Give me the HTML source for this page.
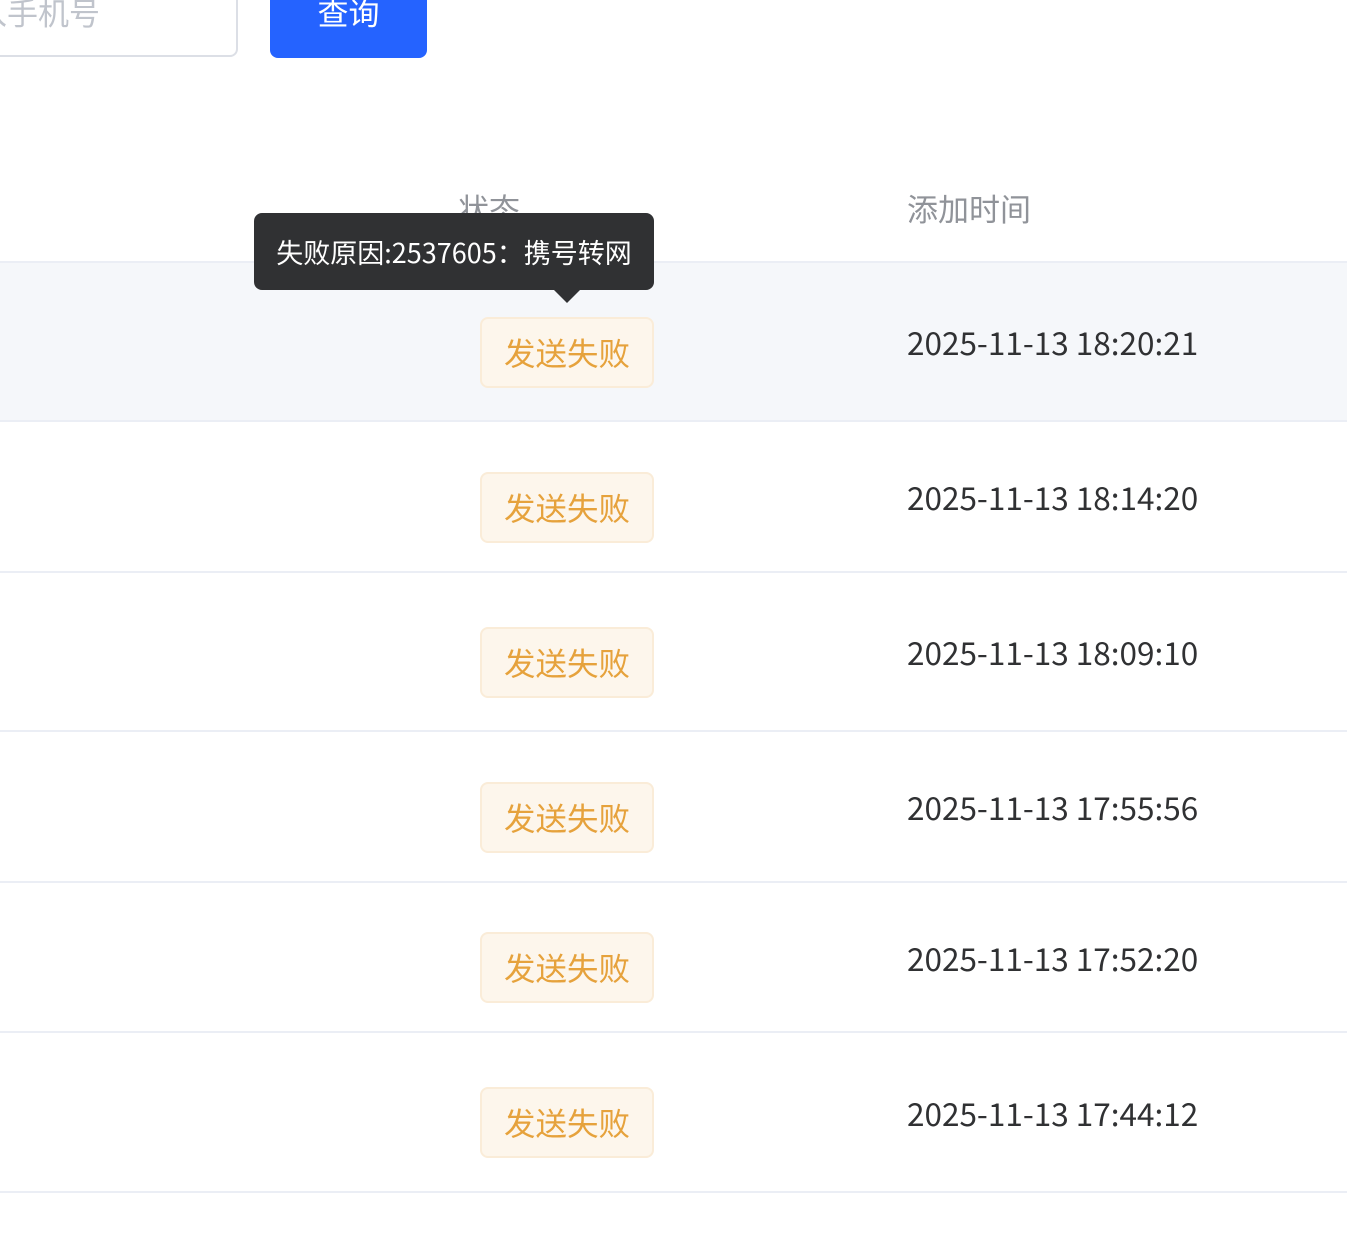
<!DOCTYPE html>
<html><head><meta charset="utf-8"><style>
*{margin:0;padding:0;box-sizing:border-box}
body{width:1347px;height:1233px;background:#fff;position:relative;overflow:hidden;font-family:"Noto Sans CJK SC","Liberation Sans",sans-serif}
.a{position:absolute}
.line{position:absolute;left:0;width:1347px;height:2px;background:#ebeef5}
.tag{position:absolute;left:480px;width:174px;height:71px;background:#fdf6ec;border:2px solid #faecd8;border-radius:8px;color:#e6a23c;font-size:31.5px;line-height:67px;text-align:center}
.dt{position:absolute;left:907px;font-size:31.5px;color:#303133;line-height:40px;white-space:nowrap}
</style></head><body>
<div class="a" style="left:-20px;top:-20px;width:258px;height:77px;border:2px solid #dcdfe6;border-radius:8px"></div>
<div class="a" style="left:-55px;top:-10px;font-size:31px;color:#c0c4cc;line-height:44px;white-space:nowrap">输入手机号</div>
<div class="a" style="left:270px;top:-20px;width:157px;height:78px;background:#2563ff;border-radius:8px;color:#fff;font-size:31px;line-height:64px;text-align:center">查询</div>
<div class="a" style="left:458px;top:186px;font-size:31px;color:#909399;line-height:44px">状态</div>
<div class="a" style="left:907px;top:186px;font-size:31px;color:#909399;line-height:44px">添加时间</div>
<div class="a" style="left:0;top:263px;width:1347px;height:158px;background:#f5f7fa"></div>
<div class="line" style="top:261px"></div>
<div class="line" style="top:420px"></div>
<div class="line" style="top:571px"></div>
<div class="line" style="top:730px"></div>
<div class="line" style="top:881px"></div>
<div class="line" style="top:1031px"></div>
<div class="line" style="top:1191px"></div>
<div class="tag" style="top:317px">发送失败</div>
<div class="tag" style="top:472px">发送失败</div>
<div class="tag" style="top:627px">发送失败</div>
<div class="tag" style="top:782px">发送失败</div>
<div class="tag" style="top:932px">发送失败</div>
<div class="tag" style="top:1087px">发送失败</div>
<div class="dt" style="top:322px">2025-11-13 18:20:21</div>
<div class="dt" style="top:477px">2025-11-13 18:14:20</div>
<div class="dt" style="top:632px">2025-11-13 18:09:10</div>
<div class="dt" style="top:787px">2025-11-13 17:55:56</div>
<div class="dt" style="top:938px">2025-11-13 17:52:20</div>
<div class="dt" style="top:1093px">2025-11-13 17:44:12</div>
<div class="a" style="left:254px;top:213px;width:400px;height:77px;background:#303133;border-radius:8px;color:#fff;font-size:27px;line-height:77px;text-align:center;white-space:nowrap">失败原因:2537605：携号转网</div>
<div class="a" style="left:554px;top:290px;width:0;height:0;border-left:13px solid transparent;border-right:13px solid transparent;border-top:13px solid #303133"></div>
</body></html>
